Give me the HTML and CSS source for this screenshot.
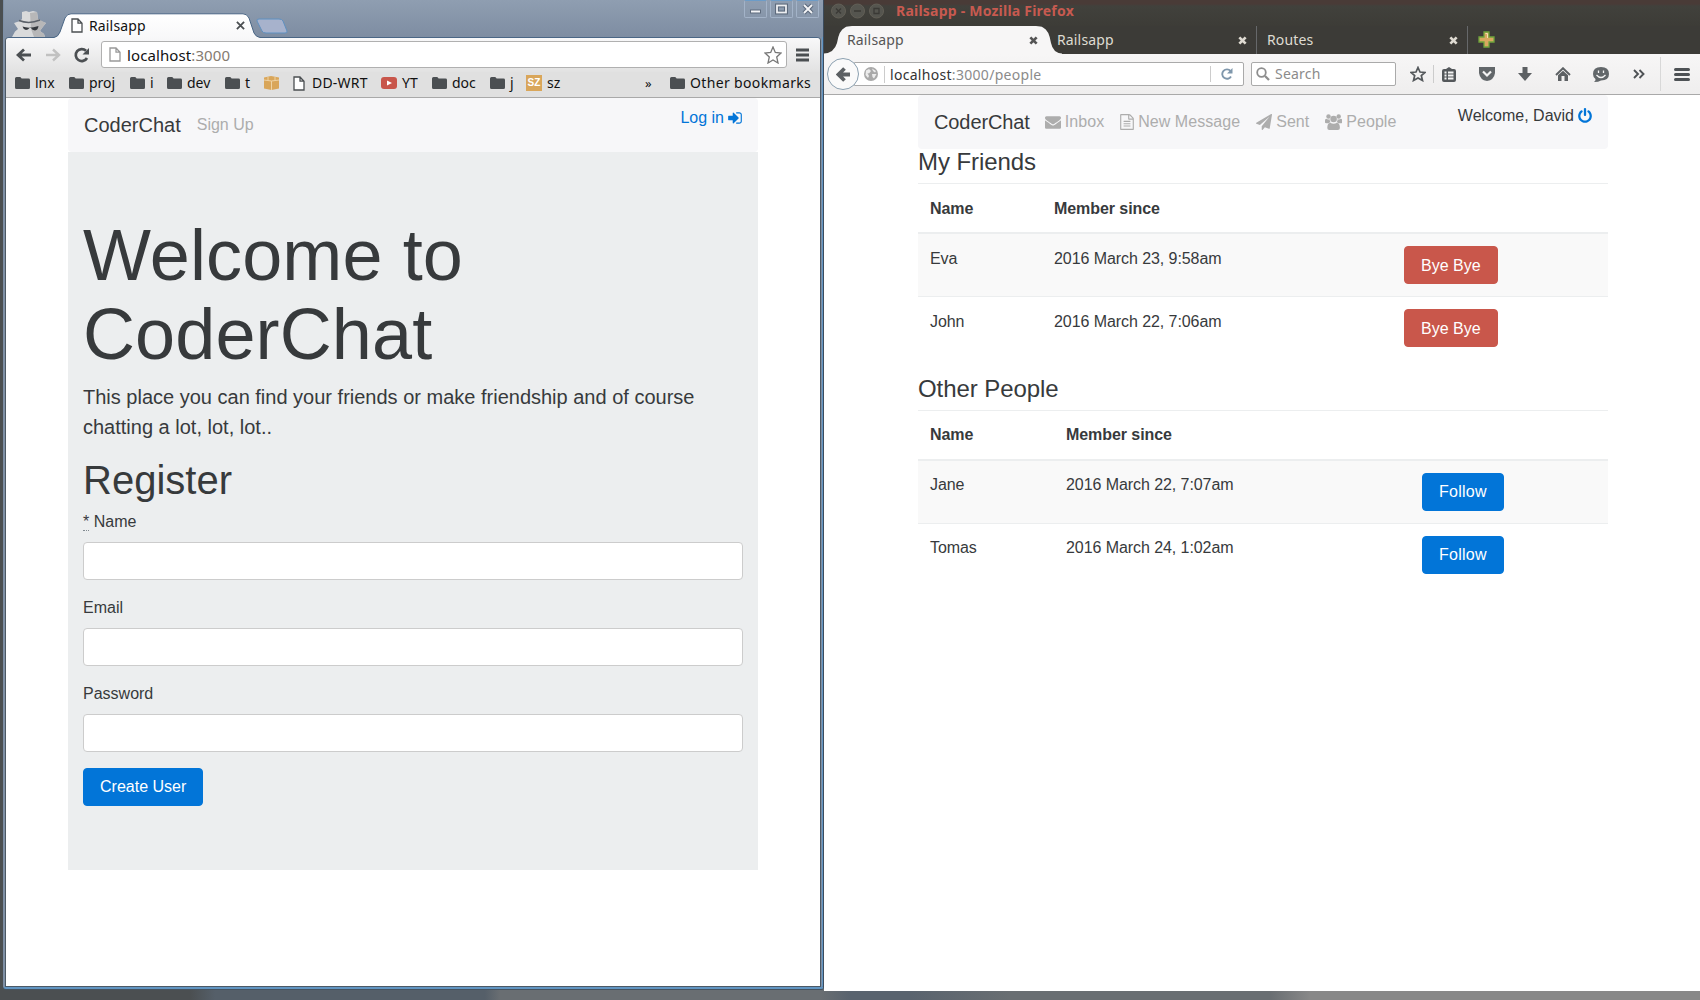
FILE: index.html
```html
<!DOCTYPE html>
<html lang="en">
<head>
<meta charset="utf-8">
<title>Railsapp</title>
<link rel="stylesheet" href="styles.css">
</head>
<body>
<svg class="defs" width="0" height="0">
  <symbol id="folder" viewBox="0 0 15 12"><path d="M0 1.500Q0 0 1.500 0H5Q6 0 6.600 1.600H13.500Q15 1.600 15 3V10.500Q15 12 13.500 12H1.500Q0 12 0 10.500Z" fill="#4b4f52"/></symbol>
  <symbol id="page" viewBox="0 0 12 15"><path d="M1 1H7L11 5.200V14H1ZM7 1V5.200H11" fill="#fff" stroke="currentColor" stroke-width="1.300"/></symbol>
  <symbol id="cross" viewBox="0 0 10 10"><path d="M1 1 9 9M9 1 1 9" stroke="currentColor" stroke-width="2"/></symbol>
  <symbol id="boldcross" viewBox="0 0 10 10"><path d="M1.500 1.500 8.500 8.500M8.500 1.500 1.500 8.500" stroke="currentColor" stroke-width="3"/></symbol>
  <symbol id="envelope" viewBox="0 0 1792 1792"><path fill="currentColor" d="M1792 710v794q0 66-47 113t-113 47h-1472q-66 0-113-47t-47-113v-794q44 49 101 87 362 246 497 345 57 42 92.500 65.500t94.500 48 110 24.500h2q51 0 110-24.500t94.500-48 92.500-65.500q170-123 498-345 57-39 100-87zm0-294q0 79-49 151t-122 123q-376 261-468 325-10 7-42.500 31t-54 38.500-52 32.500-57.500 27-50 9h-2q-23 0-50-9t-57.500-27-52-32.500-54-38.500-42.500-31q-91-64-262-182.500t-205-142.500q-62-42-117-115.500t-55-136.500q0-78 41.500-130t118.500-52h1472q65 0 112.500 47t47.500 113z"/></symbol>
  <symbol id="file" viewBox="128 0 1536 1792"><path fill="currentColor" d="M1596 380q28 28 48 76t20 88v1152q0 40-28 68t-68 28h-1344q-40 0-68-28t-28-68v-1600q0-40 28-68t68-28h896q40 0 88 20t76 48zm-444-244v376h376q-10-29-22-41l-313-313q-12-12-41-22zm384 1528v-1024h-416q-40 0-68-28t-28-68v-416h-768v1536h1280zm-1024-864q0-14 9-23t23-9h704q14 0 23 9t9 23v64q0 14-9 23t-23 9h-704q-14 0-23-9t-9-23v-64zm736 224q14 0 23 9t9 23v64q0 14-9 23t-23 9h-704q-14 0-23-9t-9-23v-64q0-14 9-23t23-9h704zm0 256q14 0 23 9t9 23v64q0 14-9 23t-23 9h-704q-14 0-23-9t-9-23v-64q0-14 9-23t23-9h704z"/></symbol>
  <symbol id="plane" viewBox="0 0 1792 1792"><path fill="currentColor" d="M1764 11q33 24 27 64l-256 1536q-5 29-32 45-14 8-31 8-11 0-24-5l-453-185-242 295q-18 23-49 23-13 0-22-4-19-7-30.500-23.500t-11.500-36.500v-349l864-1059-1069 925-395-162q-37-14-40-55-2-40 32-59l1664-960q15-9 32-9 20 0 36 11z"/></symbol>
  <symbol id="users" viewBox="0 0 17 16"><g fill="currentColor"><circle cx="3.500" cy="2.500" r="2.200"/><circle cx="13.700" cy="2.500" r="2.200"/><circle cx="8.600" cy="5" r="3.300"/><path d="M0 8.500V6.500Q0 4.800 1.300 4.800Q3 6 4.600 5.200Q4.600 7 5.600 8.300Q4.500 8.300 3.700 9.300H1.500Q0 9.300 0 8.500ZM17.200 8.500V6.500Q17.200 4.800 15.900 4.800Q14.200 6 12.600 5.200Q12.600 7 11.600 8.300Q12.700 8.300 13.500 9.300H15.700Q17.200 9.300 17.200 8.500ZM2.300 14Q2.300 9 5.300 8.700Q8.600 11 11.900 8.700Q14.900 9 14.900 14Q14.900 16 12.900 16H4.300Q2.300 16 2.300 14Z"/></g></symbol>
  <symbol id="signin" viewBox="128 0 1536 1792"><path fill="currentColor" d="M1312 896q0 26-19 45l-544 544q-19 19-45 19t-45-19-19-45v-288h-448q-26 0-45-19t-19-45v-384q0-26 19-45t45-19h448v-288q0-26 19-45t45-19 45 19l544 544q19 19 19 45zm352-352v704q0 119-84.500 203.500t-203.500 84.500h-320q-13 0-22.500-9.500t-9.500-22.500q0-4-1-20t-.5-26.500 3-23.500 10-19.500 20.500-6.500h320q66 0 113-47t47-113v-704q0-66-47-113t-113-47h-312l-11.500-1-11.500-3-8-5.500-7-9-2-13.500q0-4-1-20t-.5-26.500 3-23.500 10-19.500 20.500-6.500h320q119 0 203.500 84.500t84.500 203.500z"/></symbol>
  <symbol id="power" viewBox="128 0 1536 1792"><path fill="currentColor" d="M1664 896q0 156-61 298t-164 245-245 164-298 61-298-61-245-164-164-245-61-298q0-182 80.500-343t226.500-270q43-32 95.500-25t83.500 50q32 42 24.500 94.500t-49.500 84.500q-98 74-151.500 181t-53.500 228q0 104 40.500 198.500t109.500 163.500 163.500 109.500 198.500 40.500 198.500-40.500 163.500-109.500 109.500-163.500 40.500-198.500q0-121-53.500-228t-151.500-181q-42-32-49.500-84.500t24.500-94.500q31-43 84-50t95 25q146 109 226.500 270t80.500 343zm-640-768v640q0 52-38 90t-90 38-90-38-38-90v-640q0-52 38-90t90-38 90 38 38 90z"/></symbol>
</svg>

<div class="desktop">
  <section class="window chrome">
    <div class="chrome-tabs">
      <svg class="incognito" width="34" height="27" viewBox="0 0 34 27"><path d="M0 27 3 21.500 6 19 2 13 8 11 10 9 10 2 14 1 17 2 21 1 25 2 26 9 28 11 34 13 30 18 28 21 32 24 33 27Z" fill="#d9dadb"/><path d="M18 3 25 2 26 9 34 13 30 18 28 21 32 24 33 27H22L19 19Z" fill="#b7b7b8"/><path d="M7 10.500Q17 14.500 28 10" fill="none" stroke="#5a6068" stroke-width="1.500"/><path d="M10.500 16.500Q17 19 26.500 16Q26 20 23 20.500Q20 20 19 18H17.500Q16 20 14 20Q11 19 10.500 16.500Z" fill="#33373c"/></svg>
      <div class="chrome-tab">
        <svg class="tab-shape" width="206" height="25" viewBox="0 0 206 25"><defs><linearGradient id="tabfill" x1="0" y1="0" x2="0" y2="1"><stop offset="0" stop-color="#fff"/><stop offset="1" stop-color="#f8f8f9"/></linearGradient></defs><path d="M0 24.500Q4 24 6 19L11 5Q13 .8 17 .8H189Q193 .8 195 5L200 20Q202 24 206 24.500V25H0Z" fill="url(#tabfill)"/><path d="M0 24.500Q4 24 6 19L11 5Q13 .8 17 .8H189Q193 .8 195 5L200 20Q202 24 206 24.500" fill="none" stroke="#4a6685"/></svg>
        <svg class="tab-page" width="12" height="15"><use href="#page"/></svg>
        <span class="tab-label">Railsapp</span>
        <svg class="tab-x" width="9" height="9"><use href="#cross"/></svg>
      </div>
      <svg class="newtab" width="32" height="16" viewBox="0 0 32 16"><path d="M3 1H23Q26 1 27 3L31 13Q31.500 15 29 15H10Q7 15 6 13L1 3Q.5 1 3 1Z" fill="#a7b2cc" stroke="#5f90c0"/></svg>
      <div class="winbtns">
        <span><svg width="21" height="16"><path d="M5 10.500H16" stroke="#5d6a7c" stroke-width="4"/><path d="M6 10.500H15" stroke="#f4f5f7" stroke-width="2"/></svg></span>
        <span><svg width="21" height="16"><rect x="6" y="4.500" width="9" height="7" fill="none" stroke="#5d6a7c" stroke-width="4"/><rect x="6" y="4.500" width="9" height="7" fill="none" stroke="#eceef1" stroke-width="1.800"/></svg></span>
        <span><svg width="21" height="16"><path d="M7 4 15 12M15 4 7 12" stroke="#5d6a7c" stroke-width="4"/><path d="M7 4 15 12M15 4 7 12" stroke="#f4f5f7" stroke-width="1.800"/></svg></span>
      </div>
    </div>
    <div class="chrome-body">
      <div class="chrome-toolbar">
        <svg class="c-back" width="16" height="14"><path d="M15 7H3M8 1.500 2 7 8 12.500" fill="none" stroke="#4b4f52" stroke-width="2.800"/></svg>
        <svg class="c-fwd" width="16" height="14"><path d="M1 7H13M8 1.500 14 7 8 12.500" fill="none" stroke="#c1c1c1" stroke-width="2.400"/></svg>
        <svg class="c-reload" width="16" height="16"><path d="M13 11A6 6 0 1 1 12 3.800" fill="none" stroke="#4b4f52" stroke-width="2.700"/><path d="M15 1V7.500H8.500Z" fill="#4b4f52"/></svg>
        <div class="omnibox">
          <svg class="o-page" width="12" height="15"><use href="#page"/></svg>
          <span class="o-url">localhost<i>:3000</i></span>
          <svg class="o-star" width="18" height="18" viewBox="0 0 18 18"><path d="M9 1 11.300 6.500 17 7 12.700 11 14 17 9 14 4 17 5.300 11 1 7 6.700 6.500Z" fill="#fff" stroke="#777" stroke-width="1.300"/></svg>
        </div>
        <svg class="c-menu" width="13" height="14"><path d="M0 2H13M0 7H13M0 12H13" stroke="#4b4f52" stroke-width="3"/></svg>
      </div>
      <div class="bookmarks">
        <span class="bm b1"><svg width="15" height="12"><use href="#folder"/></svg>lnx</span>
        <span class="bm b2"><svg width="15" height="12"><use href="#folder"/></svg>proj</span>
        <span class="bm b3"><svg width="15" height="12"><use href="#folder"/></svg>i</span>
        <span class="bm b4"><svg width="15" height="12"><use href="#folder"/></svg>dev</span>
        <span class="bm b5"><svg width="15" height="12"><use href="#folder"/></svg>t</span>
        <span class="bm b6"><svg width="15" height="14" viewBox="0 0 15 14"><path d="M0 1.500 7 0 15 1.500V12.500L7.500 14 0 12.500Z" fill="#d9a65a"/><path d="M0 4 7.500 5 15 4M7.500 5V14M4 .7V4.500M11 .7V4.500" fill="none" stroke="#efd3a4"/></svg></span>
        <span class="bm b7"><svg width="12" height="15"><use href="#page"/></svg>DD-WRT</span>
        <span class="bm b8"><svg width="16" height="12"><rect width="16" height="12" rx="3" fill="#c8564b"/><path d="M6 3.500 11 6 6 8.500Z" fill="#fff"/></svg>YT</span>
        <span class="bm b9"><svg width="15" height="12"><use href="#folder"/></svg>doc</span>
        <span class="bm b10"><svg width="15" height="12"><use href="#folder"/></svg>j</span>
        <span class="bm b11"><b class="sz">SZ</b>sz</span>
        <span class="bm more">»</span>
        <span class="bm other"><svg width="15" height="12"><use href="#folder"/></svg>Other bookmarks</span>
      </div>
      <div class="page page-left">
        <nav class="navbar">
          <a class="brand">CoderChat</a>
          <a class="navlink">Sign Up</a>
          <a class="navright login">Log in <svg width="14" height="16"><use href="#signin"/></svg></a>
        </nav>
        <div class="jumbotron">
          <h1>Welcome to CoderChat</h1>
          <p class="lead">This place you can find your friends or make friendship and of course chatting a lot, lot, lot..</p>
          <h2>Register</h2>
          <form>
            <div class="field"><label><abbr>*</abbr> Name</label><input type="text"></div>
            <div class="field"><label>Email</label><input type="text"></div>
            <div class="field"><label>Password</label><input type="text"></div>
            <button type="button" class="btn primary">Create User</button>
          </form>
        </div>
      </div>
    </div>
  </section>

  <section class="window firefox">
    <div class="ff-title">
      <svg width="54" height="16" viewBox="0 0 54 16"><g fill="#55554f" stroke="#625f56"><circle cx="7.500" cy="8" r="7"/><circle cx="26.500" cy="8" r="7"/><circle cx="45.500" cy="8" r="7"/></g><path d="M5 5.500 10 10.500M10 5.500 5 10.500M23 8H30M43 5.500H48V10.500H43Z" fill="none" stroke="#3a3935" stroke-width="1.300"/></svg>
      <span>Railsapp - Mozilla Firefox</span>
    </div>
    <div class="ff-tabs">
      <div class="ff-tab active">
        <svg class="ff-shape" width="238" height="28" viewBox="0 0 238 28"><path d="M0 28V27.500Q10 27 13 17Q15 4 21 1.500Q23 0 28 0H212Q217 0 219 1.500Q225 4 227 17Q229 27 238 27.500V28Z" fill="#f7f6f6"/></svg>
        <span>Railsapp</span><svg class="ff-x" width="9" height="9"><use href="#boldcross"/></svg>
      </div>
      <div class="ff-tab t2"><span>Railsapp</span><svg class="ff-x" width="9" height="9"><use href="#boldcross"/></svg></div>
      <div class="ff-tab t3"><span>Routes</span><svg class="ff-x" width="9" height="9"><use href="#boldcross"/></svg></div>
      <svg class="ff-plus" width="17" height="17"><path d="M6 1H11V6H16V11H11V16H6V11H1V6H6Z" fill="#d9a860" stroke="#6fa53c" stroke-width="1.300"/><path d="M7.500 2.500H9.500V7" fill="none" stroke="#f3dfb0"/></svg>
    </div>
    <div class="ff-toolbar">
      <div class="ff-back"><svg width="14" height="15" viewBox="0 0 14 15"><path d="M14 7.500H4M8.500 1.500 2.500 7.500 8.500 13.500" fill="none" stroke="#5c6063" stroke-width="3.800"/></svg></div>
      <div class="ff-url">
        <svg class="globe" width="14" height="14" viewBox="0 0 14 14"><circle cx="7" cy="7" r="7" fill="#a9a9a9"/><path d="M2 3.500 5 2 7 4 5 6.500 3.500 6 5 9 4 11 1.500 8ZM8 1.500 12 4 11 5.500 9 4ZM8 7 12.500 7 10 11.500 8.500 10Z" fill="#ececec"/></svg>
        <span class="ff-addr"><b>localhost</b>:3000/people</span>
        <span class="ff-reload"><svg width="12" height="12" viewBox="0 0 12 12"><path d="M10 8.500A4.700 4.700 0 1 1 9.500 3" fill="none" stroke="#7f97ac" stroke-width="1.900"/><path d="M11.500 0V5.500H6Z" fill="#7f97ac"/></svg></span>
      </div>
      <div class="ff-search"><svg width="14" height="14"><circle cx="5.500" cy="5.500" r="4.300" fill="none" stroke="#8d8d8d" stroke-width="1.800"/><path d="M9 9 13 13" stroke="#8d8d8d" stroke-width="2.300"/></svg><span>Search</span></div>
      <div class="ff-icons">
        <svg width="16" height="16" viewBox="0 0 16 16"><path d="M8 1.500 10 6 15 6.400 11.300 9.500 12.500 14.500 8 12 3.500 14.500 4.700 9.500 1 6.400 6 6Z" fill="none" stroke="#54585b" stroke-width="1.700"/></svg>
        <i class="sep"></i>
        <svg class="i-clip" width="14" height="15" viewBox="0 0 14 15"><path d="M2 2H4L7 0 10 2H12Q14 2 14 4V13Q14 15 12 15H2Q0 15 0 13V4Q0 2 2 2Z" fill="#54585b"/><path d="M2.500 5.500H4.500M6 5.500H11.500M2.500 8.500H4.500M6 8.500H11.500M2.500 11.500H4.500M6 11.500H11.500" stroke="#f4f4f4" stroke-width="1.800"/></svg>
        <svg class="i-pocket" width="16" height="14" viewBox="0 0 16 14"><path d="M0 0H16V6Q15 13 8 14Q1 13 0 6Z" fill="#62676a"/><path d="M4 4.500 8 8.500 12 4.500" fill="none" stroke="#f4f4f4" stroke-width="2.200"/></svg>
        <svg class="i-down" width="14" height="14" viewBox="0 0 14 14"><path d="M4.500 0H9.500V6H14L7 14 0 6H4.500Z" fill="#5c6063"/></svg>
        <svg class="i-home" width="16" height="14" viewBox="0 0 16 14"><path d="M1 8 8 1.200 15 8" fill="none" stroke="#5c6063" stroke-width="1.900"/><path d="M3 8.300 8 3.800 13 8.300V14H9.500V9H6.500V14H3Z" fill="#5c6063"/></svg>
        <svg class="i-chat" width="16" height="15" viewBox="0 0 16 15"><path d="M8 0Q16 0 16 7Q16 13.500 8 13.500Q5.500 15 1 15Q3 13.500 2.500 12Q0 10.500 0 7Q0 0 8 0Z" fill="#62676a"/><path d="M5.500 3.500V6M10.500 3.500V6M3.500 8Q8 13 12.500 8" fill="none" stroke="#f4f4f4" stroke-width="1.300"/></svg>
        <svg class="i-more" width="12" height="10" viewBox="0 0 12 10"><path d="M1 1 5 5 1 9M6.500 1 10.500 5 6.500 9" fill="none" stroke="#4e5255" stroke-width="1.900"/></svg>
        <i class="sep2"></i>
        <svg class="i-menu" width="16" height="13"><path d="M1.500 1.500H14.500M1.500 6.500H14.500M1.500 11.500H14.500" stroke="#4e5255" stroke-width="3" stroke-linecap="round"/></svg>
      </div>
    </div>
    <div class="page page-right">
      <nav class="navbar">
        <a class="brand">CoderChat</a>
        <a class="navlink"><svg width="16" height="16"><use href="#envelope"/></svg> Inbox</a>
        <a class="navlink"><svg width="14" height="16"><use href="#file"/></svg> New Message</a>
        <a class="navlink"><svg width="16" height="16"><use href="#plane"/></svg> Sent</a>
        <a class="navlink"><svg width="17" height="16"><use href="#users"/></svg> People</a>
        <span class="navright">Welcome, David <svg class="blue" width="14" height="16"><use href="#power"/></svg></span>
      </nav>
      <h4>My Friends</h4>
      <table class="friends">
        <colgroup><col class="f1"><col class="f2"><col></colgroup>
        <thead><tr><th>Name</th><th>Member since</th><th></th></tr></thead>
        <tbody>
          <tr><td>Eva</td><td>2016 March 23, 9:58am</td><td><button type="button" class="btn danger">Bye Bye</button></td></tr>
          <tr><td>John</td><td>2016 March 22, 7:06am</td><td><button type="button" class="btn danger">Bye Bye</button></td></tr>
        </tbody>
      </table>
      <h4 class="others">Other People</h4>
      <table>
        <colgroup><col class="o1"><col class="o2"><col></colgroup>
        <thead><tr><th>Name</th><th>Member since</th><th></th></tr></thead>
        <tbody>
          <tr><td>Jane</td><td>2016 March 22, 7:07am</td><td><button type="button" class="btn primary follow">Follow</button></td></tr>
          <tr><td>Tomas</td><td>2016 March 24, 1:02am</td><td><button type="button" class="btn primary follow">Follow</button></td></tr>
        </tbody>
      </table>
    </div>
  </section>
</div>
</body>
</html>
```
FILE: styles.css
```css
* { box-sizing: border-box; }
body { margin: 0; overflow: hidden; font: 16px/1.5 "Liberation Sans", Arial, sans-serif; color: #373a3c; }
h1, h2, h4, p { margin: 0; font-weight: 400; }
svg { display: block; flex: none; }
.defs { position: absolute; }
.desktop { position: relative; width: 1700px; height: 1000px; background: linear-gradient(90deg, #4b4f51 0 190px, #555f69 215px 485px, #696e72 500px 820px, #59636e 850px 910px, #696e72 1010px 1270px, #888 1310px); }
.window { position: absolute; top: 0; display: flex; flex-direction: column; }

/* Chrome window */
.chrome { left: 3px; width: 821px; height: 989px; padding: 0 2px 0 1px; background: #8090a4; border-left: 1px solid #7d8fa6; border-right: 1px solid #3c4c5e; border-bottom: 2px solid #6195c2; border-radius: 0 0 3px 3px; box-shadow: inset -1px 0 #6195c2, 0 1px #45525f; font-family: "Noto Sans", sans-serif; }
.chrome-tabs { height: 37px; margin: 0 -2px 0 -1px; display: flex; background: linear-gradient(#8f9eb1, #7e8da2); }
.incognito { margin: 10px 0 0 8px; }
.chrome-tab { position: relative; width: 206px; height: 25px; margin: 13px 0 0 8px; display: flex; align-items: center; padding: 0 15px 0 17px; color: #4b4f52; }
.tab-shape { position: absolute; left: 0; top: 0; }
.tab-page, .tab-x, .tab-label { position: relative; }
.tab-label { margin-left: 6px; font-size: 14px; line-height: 20px; letter-spacing: .15px; color: #111; flex: 1; }
.newtab { margin: 18px 0 0 -4px; }
.winbtns { margin-left: auto; display: flex; gap: 3px; padding-right: 4px; }
.winbtns span { width: 23px; height: 18px; border: 1px solid #a3b3c8; border-top-color: #6c9cc8; border-radius: 2px; }
.chrome-body { flex: 1; min-height: 0; background: #fff; border: 1px solid #4c5966; border-top-color: #4a6685; border-radius: 4px 4px 0 0; display: flex; flex-direction: column; }
.chrome-toolbar { height: 34px; display: flex; align-items: center; padding: 0 11px 1px 10px; background: linear-gradient(#f8f8f9, #e2e2e2); border-radius: 4px 4px 0 0; }
.c-fwd { margin-left: 13px; }
.c-reload { margin-left: 13px; }
.omnibox { flex: 1; height: 27px; margin: 0 9px 0 11px; background: #fff; border: 1px solid #b0b0b0; border-radius: 3px; display: flex; align-items: center; padding: 0 4px 0 7px; color: #999; }
.o-url { margin-left: 6px; font-size: 15px; line-height: 24px; letter-spacing: .1px; color: #111; flex: 1; }
.o-url i { font-style: normal; color: #857b70; }
.bookmarks { height: 26px; display: flex; align-items: center; background: #e0e0e0; border-bottom: 1px solid #a9a9a9; font-size: 14px; line-height: 22px; color: #111; padding-bottom: 3px; }
.bm { display: flex; align-items: center; gap: 5px; white-space: nowrap; flex: none; color: #111; }
.bm svg { color: #4b4f52; }
.b1 { width: 54px; margin-left: 9px; }
.b2 { width: 61px; }
.b3 { width: 37px; }
.b4 { width: 58px; }
.b5 { width: 39px; }
.b6 { width: 29px; }
.b7 { width: 88px; gap: 7px; letter-spacing: .2px; }
.b8 { width: 51px; }
.b9 { width: 58px; }
.b10 { width: 36px; }
.b11 { width: 119px; }
.more { width: 25px; font-size: 13px; }
.other { letter-spacing: .35px; }
.sz { width: 16px; height: 16px; background: #d9a65a; color: #fff; font: bold 10px/16px "Liberation Sans", sans-serif; text-align: center; }

/* Rails pages */
.page { width: 690px; font-family: "Liberation Sans", Arial, sans-serif; flex: none; }
.page-left { margin-left: 62px; }
.navbar { height: 54px; background: #f7f7f9; border-radius: 4px; padding: 8px 16px; display: flex; align-items: center; }
.brand { font-size: 20px; line-height: 30px; margin-right: 16px; }
.navlink { display: flex; align-items: center; gap: 4px; color: #adadad; margin-right: 16px; white-space: nowrap; }
.navright { margin: 0 0 0 auto; align-self: flex-start; display: flex; align-items: center; gap: 4px; }
.login, .blue { color: #0275d8; }
.page-right .brand { margin-right: 15px; letter-spacing: -.1px; }
.page-right .navlink { letter-spacing: .05px; }
.page-right .navright { margin-top: 1px; }
.jumbotron { padding: 64px 15px; background: #eceeef; height: 718px; }
h1 { font-size: 72px; line-height: 1.1; letter-spacing: .12px; margin-bottom: 8px; }
.lead { font-size: 20px; margin-bottom: 16px; }
h2 { font-size: 40px; line-height: 1.1; margin-bottom: 8px; }
.field { margin-bottom: 16px; }
.field label { display: block; margin-bottom: 8px; }
.field abbr { border-bottom: 1px dotted #818a91; }
.field input { display: block; width: 100%; height: 38px; border: 1px solid #ccc; border-radius: 4px; background: #fff; }
.btn { display: block; height: 38px; padding: 0 16px; border: 1px solid; border-radius: 4px; color: #fff; font: 16px/24px "Liberation Sans", Arial, sans-serif; }
.primary { background: #0275d8; border-color: #0275d8; }
.danger { background: #c9574b; border-color: #c9574b; }
.follow { letter-spacing: .25px; }
h4 { font-size: 24px; line-height: 26.4px; letter-spacing: -.08px; margin-bottom: 8px; }
.others { padding-top: 1px; margin-bottom: 7px; }
table { width: 100%; table-layout: fixed; border-collapse: collapse; margin-bottom: 16px; }
th, td { padding: 12px; text-align: left; vertical-align: top; border-top: 1px solid #eceeef; letter-spacing: -.07px; }
thead th { border-bottom: 2px solid #eceeef; height: 49px; }
tbody tr:nth-child(odd) { background: #f9f9f9; }
.friends th { padding-top: 13px; padding-bottom: 11px; }
.friends td { padding-top: 13px; padding-bottom: 12px; }
.friends .btn { margin-top: -1px; padding-top: 2px; }
.f1 { width: 124px; } .f2 { width: 350px; }
.o1 { width: 136px; } .o2 { width: 356px; }

/* Firefox window */
.firefox { left: 824px; width: 876px; height: 991px; background: #fff; font-family: "Noto Sans", sans-serif; }
.ff-title { height: 26px; background: linear-gradient(#493b37 0 4px, #41413c 6px, #3d3c37); display: flex; align-items: center; padding: 0 0 5px 7px; gap: 11px; font-size: 14px; line-height: 20px; font-weight: 700; letter-spacing: .22px; color: #c75a50; }
.ff-tabs { height: 28px; background: #3c3b37; display: flex; }
.ff-tab { position: relative; display: flex; align-items: center; width: 210px; padding: 0 9px 0 10px; font-size: 14px; line-height: 20px; letter-spacing: .15px; color: #dfdbd2; }
.ff-tab span { flex: 1; }
.ff-tab span, .ff-x { position: relative; }
.ff-tab.active { width: 223px; padding: 0 9px 0 23px; color: #555; }
.ff-shape { position: absolute; left: 0; top: 0; }
.t2, .t3 { border-right: 1px solid #66686a; }
.ff-tab.t3 { width: 211px; }
.ff-plus { margin: 5px 0 0 10px; }
.ff-toolbar { height: 41px; display: flex; align-items: center; background: linear-gradient(#f7f6f6, #efeeee); border-bottom: 1px solid #a9a9a9; padding-left: 3px; }
.ff-back { position: relative; z-index: 1; width: 32px; height: 32px; border: 1px solid #8ba0b0; border-radius: 50%; background: #fafafa; display: grid; place-items: center; flex: none; }
.ff-url { width: 390px; height: 24px; margin-left: -5px; border: 1px solid #aaa; border-radius: 0 2px 2px 0; background: #fff; display: flex; align-items: center; padding-left: 9px; }
.ff-addr { flex: 1; margin-left: 6px; border-left: 1px solid #ccc; padding: 1px 0 0 5px; font-size: 14px; line-height: 16px; letter-spacing: .3px; color: #8b8b8b; }
.ff-addr b { font-weight: 400; color: #333; }
.ff-reload { border-left: 1px solid #ccc; width: 33px; padding-left: 10px; height: 16px; display: flex; align-items: center; }
.ff-search { width: 145px; height: 24px; margin-left: 7px; border: 1px solid #aaa; border-radius: 2px; background: #fff; display: flex; align-items: center; gap: 5px; padding-left: 4px; font-size: 14px; line-height: 20px; letter-spacing: .2px; color: #8b8b8b; }
.ff-icons { display: flex; align-items: center; margin-left: 14px; }
.sep { width: 1px; height: 18px; background: #ccc; margin-left: 7px; }
.i-clip { margin-left: 8px; }
.i-pocket { margin-left: 23px; }
.i-down { margin-left: 23px; }
.i-home { margin-left: 23px; }
.i-chat { margin-left: 22px; }
.i-more { margin-left: 24px; }
.sep2 { width: 1px; height: 34px; background: #d8d8d8; margin-left: 15px; }
.i-menu { margin-left: 13px; }
.page-right { margin-left: 94px; }
```
